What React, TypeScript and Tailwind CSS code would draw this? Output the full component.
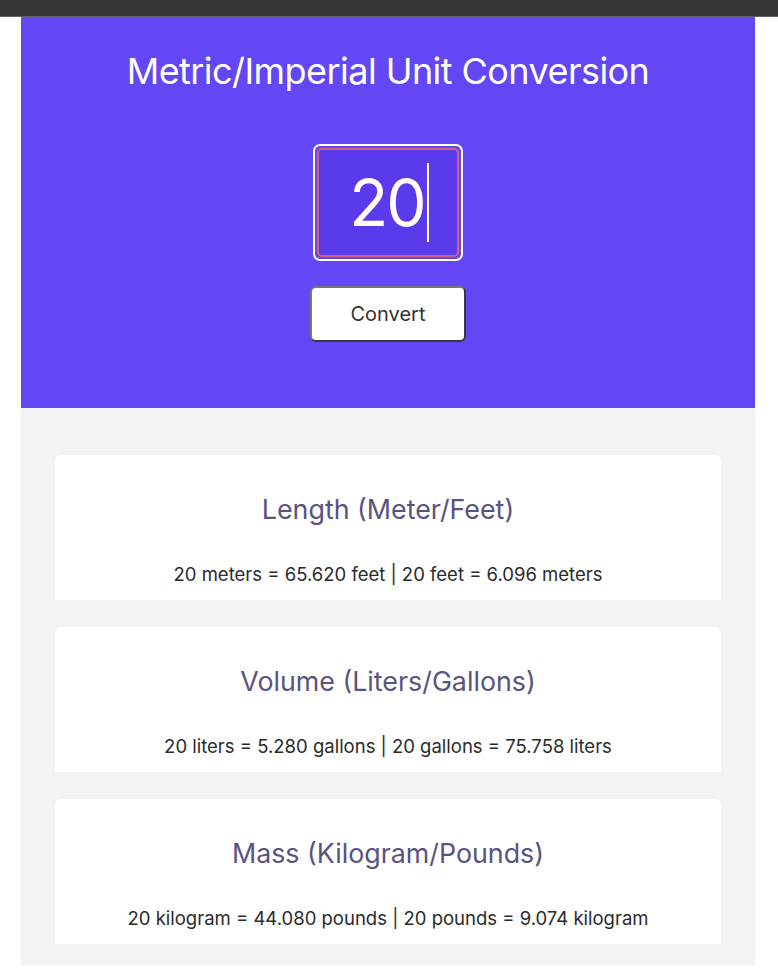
import { useState } from 'react'

const f = (n: number) => n.toFixed(3)

const App = () => {
  const [value, setValue] = useState('20')
  const n = Number(value) || 0

  const rows = [
    {
      title: 'Length (Meter/Feet)',
      text: `${n} meters = ${f(n * 3.281)} feet | ${n} feet = ${f(n / 3.281)} meters`,
    },
    {
      title: 'Volume (Liters/Gallons)',
      text: `${n} liters = ${f(n * 0.264)} gallons | ${n} gallons = ${f(n / 0.264)} liters`,
    },
    {
      title: 'Mass (Kilogram/Pounds)',
      text: `${n} kilogram = ${f(n * 2.204)} pounds | ${n} pounds = ${f(n / 2.204)} kilogram`,
    },
  ]

  return (
    <div className="min-h-[978px] bg-white font-['Inter',sans-serif]">
      {/* browser strip */}
      <div className="h-4 bg-[#35363a]" />
      <div className="h-px bg-[#5f6368]" />

      <div className="mx-[21px] w-[734px]">
        {/* Header */}
        <div className="bg-[#6347f5] h-[391px] flex flex-col items-center pt-[32px]">
          <h1 className="text-[36px] leading-[44px] text-white tracking-[-0.55px]">
            Metric/Imperial Unit Conversion
          </h1>
          <div className="mt-[51px] w-[150px] h-[117px] rounded-[7px] border-2 border-white p-[2px]">
            <div className="w-full h-full rounded-[5px] border-2 border-[#d2607a] bg-[#5a3aea] flex items-center justify-center pl-[2px]">
              <input
                value={value}
                onChange={(e) => setValue(e.target.value)}
                className="[field-sizing:content] min-w-[20px] bg-transparent text-center text-white text-[64px] tracking-[-2px] leading-none outline-none caret-white"
              />
              {/* caret */}
              <span className="ml-[2px] w-[2px] h-[79px] bg-white" />
            </div>
          </div>
          <button className="mt-[25px] w-[156px] h-[56px] bg-white rounded-[6px] border-2 border-[#3a3a3a] border-t-[#767676] border-l-[#767676] text-[20px] text-[#333]">
            Convert
          </button>
        </div>

        {/* Results */}
        <div className="bg-[#f3f3f3] px-[34px] pt-[47px] pb-[21px] flex flex-col gap-[27px]">
          {rows.map((r) => (
            <div key={r.title} className="bg-white rounded-t-[6px] h-[145px] flex flex-col items-center pt-[36px]">
              <h2 className="text-[26.8px] leading-[36px] text-[#5a5380]">{r.title}</h2>
              <p className="mt-[35px] text-[18.5px] leading-[24px] text-[#2b2b2b]">{r.text}</p>
            </div>
          ))}
        </div>
      </div>
    </div>
  )
}

export default App
